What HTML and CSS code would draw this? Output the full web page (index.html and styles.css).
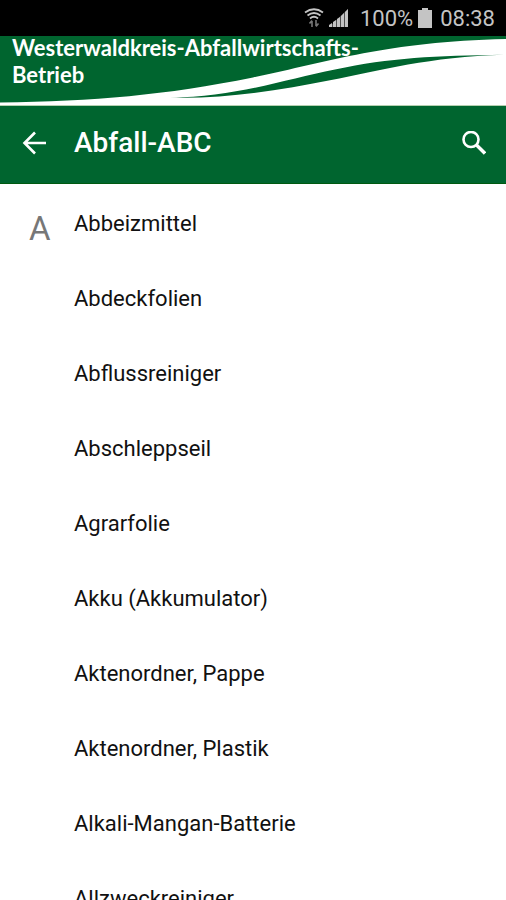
FILE: index.html
```html
<!DOCTYPE html>
<html lang="de">
<head>
<meta charset="utf-8">
<meta name="viewport" content="width=device-width, initial-scale=1">
<title>Abfall-ABC</title>
<link rel="stylesheet" href="styles.css">
</head>
<body>
<div class="screen">
  <div class="status">
    <svg class="status-wifi" viewBox="0 0 20 20" aria-hidden="true">
      <path d="M1 4.500Q10-2 19 4.500M3.500 7.500Q10 2.500 16.500 7.500M6 10.500Q10 7 14 10.500" fill="none" stroke="#c4c4c4" stroke-width="1.800"/>
      <path d="M8 19v-6M5.500 15.500L8 12.500M12 12v6M14.500 15.500L12 18.500" fill="none" stroke="#777" stroke-width="1.600"/>
    </svg>
    <svg class="status-signal" viewBox="0 0 20 20" aria-hidden="true">
      <path d="M0 19v-2l3-2v4zM4 19v-5l3-2v7zM8 19v-8l3-2v10zM12 19V8l3-3v14zM16 19V4l3-3v18z" fill="#c4c4c4"/>
      <path d="M0 19L19 1v18z" fill="#c4c4c4" opacity=".4"/>
    </svg>
    <span class="status-percent">100%</span>
    <svg class="status-battery" viewBox="0 0 14 20" aria-hidden="true">
      <path d="M4 0h6v2h4v18H0V2h4z" fill="#c4c4c4"/>
    </svg>
    <time>08:38</time>
  </div>
  <header class="banner">
    <svg class="swoosh" viewBox="0 0 506 70" preserveAspectRatio="none" aria-hidden="true">
      <path d="M0 67.500C95 66 165 60 253 42C330 26 385 6 506 3V70H0z" fill="#fff"/>
      <path d="M170 62.500C235 62 285 44 335 34C390 22 435 20 504 19C430 21 380 35 330 45C280 55 225 64 170 62.500z" fill="#00652f"/>
    </svg>
    <p class="org">Westerwaldkreis-Abfallwirtschafts-<br>Betrieb</p>
  </header>
  <nav class="appbar">
    <button class="icon-button" type="button" aria-label="Zurück">
      <svg viewBox="0 0 24 24" aria-hidden="true"><path d="M24 12H2.500M13 1.500L2.500 12 13 22.500" fill="none" stroke="#fff" stroke-width="2.600"/></svg>
    </button>
    <h1>Abfall-ABC</h1>
    <button class="icon-button" type="button" aria-label="Suchen">
      <svg viewBox="0 0 24 24" aria-hidden="true"><circle cx="9" cy="8.500" r="7.500" fill="none" stroke="#fff" stroke-width="2.600"/><path d="M14.500 14L23 22.500" stroke="#fff" stroke-width="3.400"/></svg>
    </button>
  </nav>
  <main class="section">
    <h2>A</h2>
    <ul class="entries">
      <li>Abbeizmittel</li>
      <li>Abdeckfolien</li>
      <li>Abflussreiniger</li>
      <li>Abschleppseil</li>
      <li>Agrarfolie</li>
      <li>Akku (Akkumulator)</li>
      <li>Aktenordner, Pappe</li>
      <li>Aktenordner, Plastik</li>
      <li>Alkali-Mangan-Batterie</li>
      <li>Allzweckreiniger</li>
    </ul>
  </main>
</div>
</body>
</html>
```
FILE: styles.css
```css
* { box-sizing: border-box; }
body {
  margin: 0;
  background: #fff;
  color: #111;
  font-family: Roboto, "Liberation Sans", sans-serif;
}
h1, h2, p, ul { margin: 0; padding: 0; }
.screen {
  display: flex;
  flex-direction: column;
  height: 100vh;
  overflow: hidden;
}
.status {
  flex: none;
  display: flex;
  align-items: center;
  justify-content: flex-end;
  gap: 5px;
  height: 36px;
  padding-right: 11px;
  background: #000;
  color: #c4c4c4;
  font-size: 22px;
}
.status svg { height: 20px; }
.status-wifi { width: 20px; }
.status-signal { width: 20px; }
.status-percent { margin-left: 6px; }
.status-battery { width: 14px; }
.status time { margin-left: 3px; }
.banner {
  flex: none;
  position: relative;
  height: 70px;
  background: #00652f;
  border-bottom: 1px solid #b5d0b0;
}
.swoosh {
  position: absolute;
  inset: 0;
  width: 100%;
  height: 100%;
}
.org {
  position: relative;
  margin-top: -2px;
  padding-left: 12px;
  color: #fff;
  font-family: Lato, sans-serif;
  font-size: 22px;
  font-weight: 700;
  line-height: 27px;
  white-space: nowrap;
}
.appbar {
  flex: none;
  display: flex;
  align-items: center;
  height: 78px;
  padding: 0 18px 4px 20px;
  background: #00652f;
  border-bottom: 1px solid #005a10;
  color: #fff;
}
.appbar h1 {
  flex: 1;
  padding-left: 26px;
  font-size: 28px;
  font-weight: 500;
}
.icon-button {
  display: flex;
  padding: 2px;
  border: 0;
  background: none;
}
.icon-button svg { width: 24px; height: 24px; }
.section {
  flex: 1;
  display: flex;
  min-height: 0;
  overflow: hidden;
}
.section h2 {
  width: 74px;
  padding: 25px 0 0 29px;
  color: #777;
  font-size: 33px;
  font-weight: 400;
  line-height: 40px;
}
.entries { list-style: none; }
.entries li {
  height: 75px;
  padding-top: 24px;
  font-size: 22px;
  line-height: 32px;
}
```
